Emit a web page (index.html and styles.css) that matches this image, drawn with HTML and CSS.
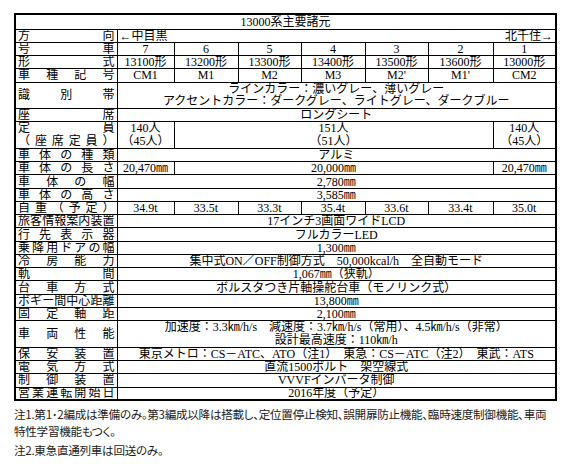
FILE: index.html
```html
<!DOCTYPE html>
<html lang="ja">
<head>
<meta charset="utf-8">
<title>13000系主要諸元</title>
<link rel="stylesheet" href="styles.css">
</head>
<body>
<div class="page">
<table class="spec">
  <colgroup>
    <col class="c-lbl"><col class="c7"><col class="c6"><col class="c5"><col class="c4"><col class="c3"><col class="c2"><col class="c1">
  </colgroup>
  <tr class="title"><td colspan="8">13000系主要諸元</td></tr>
  <tr>
    <th><div class="dist"><span>方</span><span>向</span></div></th>
    <td colspan="7"><div class="dir"><span>←中目黒</span><span>北千住→</span></div></td>
  </tr>
  <tr>
    <th><div class="dist"><span>号</span><span>車</span></div></th>
    <td>7</td><td>6</td><td>5</td><td>4</td><td>3</td><td>2</td><td>1</td>
  </tr>
  <tr>
    <th><div class="dist"><span>形</span><span>式</span></div></th>
    <td>13100形</td><td>13200形</td><td>13300形</td><td>13400形</td><td>13500形</td><td>13600形</td><td>13000形</td>
  </tr>
  <tr>
    <th><div class="dist"><span>車</span><span>種</span><span>記</span><span>号</span></div></th>
    <td>CM1</td><td>M1</td><td>M2</td><td>M3</td><td>M2'</td><td>M1'</td><td>CM2</td>
  </tr>
  <tr class="dbl">
    <th><div class="dist"><span>識</span><span>別</span><span>帯</span></div></th>
    <td colspan="7"><div>ラインカラー：濃いグレー、薄いグレー</div><div>アクセントカラー：ダークグレー、ライトグレー、ダークブルー</div></td>
  </tr>
  <tr>
    <th><div class="dist"><span>座</span><span>席</span></div></th>
    <td colspan="7">ロングシート</td>
  </tr>
  <tr class="dbl">
    <th><div class="dist"><span>定</span><span>員</span></div><div class="dist"><span>（</span><span>座</span><span>席</span><span>定</span><span>員</span><span>）</span></div></th>
    <td><div>140人</div><div>（45人）</div></td>
    <td colspan="5"><div>151人</div><div>（51人）</div></td>
    <td><div>140人</div><div>（45人）</div></td>
  </tr>
  <tr>
    <th><div class="dist"><span>車</span><span>体</span><span>の</span><span>種</span><span>類</span></div></th>
    <td colspan="7">アルミ</td>
  </tr>
  <tr>
    <th><div class="dist"><span>車</span><span>体</span><span>の</span><span>長</span><span>さ</span></div></th>
    <td>20,470㎜</td>
    <td colspan="5">20,000㎜</td>
    <td>20,470㎜</td>
  </tr>
  <tr>
    <th><div class="dist"><span>車</span><span>体</span><span>の</span><span>幅</span></div></th>
    <td colspan="7">2,780㎜</td>
  </tr>
  <tr>
    <th><div class="dist"><span>車</span><span>体</span><span>の</span><span>高</span><span>さ</span></div></th>
    <td colspan="7">3,585㎜</td>
  </tr>
  <tr>
    <th><div class="dist"><span>自</span><span>重</span><span>（</span><span>予</span><span>定</span><span>）</span></div></th>
    <td>34.9t</td><td>33.5t</td><td>33.3t</td><td>35.4t</td><td>33.6t</td><td>33.4t</td><td>35.0t</td>
  </tr>
  <tr>
    <th><div class="dist"><span>旅</span><span>客</span><span>情</span><span>報</span><span>案</span><span>内</span><span>装</span><span>置</span></div></th>
    <td colspan="7">17インチ3画面ワイドLCD</td>
  </tr>
  <tr>
    <th><div class="dist"><span>行</span><span>先</span><span>表</span><span>示</span><span>器</span></div></th>
    <td colspan="7">フルカラーLED</td>
  </tr>
  <tr>
    <th><div class="dist"><span>乗</span><span>降</span><span>用</span><span>ド</span><span>ア</span><span>の</span><span>幅</span></div></th>
    <td colspan="7">1,300㎜</td>
  </tr>
  <tr>
    <th><div class="dist"><span>冷</span><span>房</span><span>能</span><span>力</span></div></th>
    <td colspan="7">集中式ON／OFF制御方式　50,000kcal/h　全自動モード</td>
  </tr>
  <tr>
    <th><div class="dist"><span>軌</span><span>間</span></div></th>
    <td colspan="7">1,067㎜（狭軌）</td>
  </tr>
  <tr>
    <th><div class="dist"><span>台</span><span>車</span><span>方</span><span>式</span></div></th>
    <td colspan="7">ボルスタつき片軸操舵台車（モノリンク式）</td>
  </tr>
  <tr>
    <th><div class="dist"><span>ボ</span><span>ギ</span><span>ー</span><span>間</span><span>中</span><span>心</span><span>距</span><span>離</span></div></th>
    <td colspan="7">13,800㎜</td>
  </tr>
  <tr>
    <th><div class="dist"><span>固</span><span>定</span><span>軸</span><span>距</span></div></th>
    <td colspan="7">2,100㎜</td>
  </tr>
  <tr class="dbl">
    <th><div class="dist"><span>車</span><span>両</span><span>性</span><span>能</span></div></th>
    <td colspan="7"><div>加速度：3.3㎞/h/s　減速度：3.7㎞/h/s（常用）、4.5㎞/h/s（非常）</div><div>設計最高速度：110㎞/h</div></td>
  </tr>
  <tr>
    <th><div class="dist"><span>保</span><span>安</span><span>装</span><span>置</span></div></th>
    <td colspan="7">東京メトロ：CS－ATC、ATO（注1）　東急：CS－ATC（注2）　東武：ATS</td>
  </tr>
  <tr>
    <th><div class="dist"><span>電</span><span>気</span><span>方</span><span>式</span></div></th>
    <td colspan="7">直流1500ボルト　架空線式</td>
  </tr>
  <tr>
    <th><div class="dist"><span>制</span><span>御</span><span>装</span><span>置</span></div></th>
    <td colspan="7">VVVFインバータ制御</td>
  </tr>
  <tr>
    <th><div class="dist"><span>営</span><span>業</span><span>運</span><span>転</span><span>開</span><span>始</span><span>日</span></div></th>
    <td colspan="7">2016年度（予定）</td>
  </tr>
</table>
<div class="notes">
  <p>注1.第1･2編成は準備のみ。第3編成以降は搭載し、定位置停止検知、誤開扉防止機能、臨時速度制御機能、車両<br>特性学習機能もつく。</p>
  <p>注2.東急直通列車は回送のみ。</p>
</div>
</div>
</body>
</html>
```
FILE: styles.css
```css
html, body {
  margin: 0;
  padding: 0;
  background: #fff;
}

.page {
  padding: 13px 0 0 14px;
  width: 541px;
}

.spec {
  border-collapse: collapse;
  table-layout: fixed;
  width: 541px;
  border: 2px solid #000;
  font-family: "Liberation Serif", "Noto Sans CJK JP", serif;
  font-size: 12px;
  color: #000;
}

.c-lbl { width: 102px; }
.c7 { width: 57px; }
.c6 { width: 64px; }
.c5 { width: 63px; }
.c4 { width: 64px; }
.c3 { width: 63px; }
.c2 { width: 65px; }
.c1 { width: 63px; }

.spec tr { height: 13.25px; }
.spec tr.dbl { height: 26.6px; }
.spec tr.title { height: 15px; }

.spec td, .spec th {
  border: 1px solid #000;
  padding: 0 2px;
  line-height: 10px;
  text-align: center;
  vertical-align: middle;
  font-weight: normal;
  white-space: nowrap;
  overflow: hidden;
}

.spec tr.dbl td > div, .spec tr.dbl th > div {
  height: 12.8px;
  line-height: 12.8px;
  overflow: visible;
}

.dist {
  display: flex;
  justify-content: space-between;
}

.dir {
  display: flex;
  justify-content: space-between;
}

.notes {
  font-family: "Noto Sans CJK JP", sans-serif;
  font-size: 11.6px;
  letter-spacing: -0.3px;
  color: #222;
  margin-top: 5px;
  font-feature-settings: "palt";
  white-space: nowrap;
}

.notes p {
  margin: 0 0 2px 0;
  line-height: 17px;
}
```
